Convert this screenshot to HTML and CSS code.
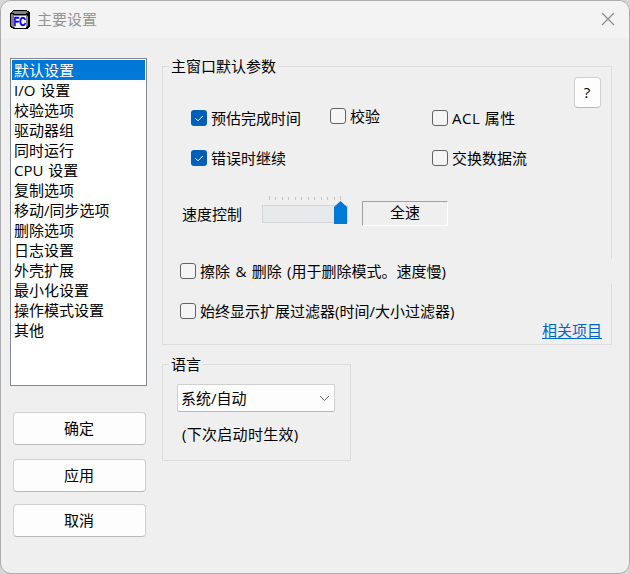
FILE: index.html
```html
<!DOCTYPE html>
<html lang="zh-CN">
<head>
<meta charset="utf-8">
<title>主要设置</title>
<link rel="stylesheet" href="styles.css">
</head>
<body>
<div class="window">
  <header class="titlebar">
    <svg class="app-icon" width="20" height="20" viewBox="0 0 20 20" shape-rendering="crispEdges">
      <path fill="#000" d="M3 0H17V1H19V2H20V17H19V18H18V19H3V18H1V17H0V3H1V2H2V1H3Z"/>
      <path fill="#808080" d="M3 1H17V2H18V3H16V4H4V3H2V2H3Z"/>
      <path fill="#808080" d="M1 4H3V5H17V6H18V16H17V17H16V18H4V17H2V16H1Z"/>
      <path fill="#fff" d="M4 6H16V18H5V17H4Z"/>
      <text x="3.6" y="16" textLength="12.4" lengthAdjust="spacingAndGlyphs">FC</text>
    </svg>
    <h1>主要设置</h1>
    <svg class="close" width="14" height="14" viewBox="0 0 14 14"><path d="M1 1L13 13M13 1L1 13"/></svg>
  </header>
  <main class="content">
    <aside class="sidebar">
      <ul class="listbox">
        <li class="selected">默认设置</li>
        <li>I/O 设置</li>
        <li>校验选项</li>
        <li>驱动器组</li>
        <li>同时运行</li>
        <li>CPU 设置</li>
        <li>复制选项</li>
        <li>移动/同步选项</li>
        <li>删除选项</li>
        <li>日志设置</li>
        <li>外壳扩展</li>
        <li>最小化设置</li>
        <li>操作模式设置</li>
        <li>其他</li>
      </ul>
      <div class="actions">
        <button class="button">确定</button>
        <button class="button apply">应用</button>
        <button class="button">取消</button>
      </div>
    </aside>
    <div class="panels">
      <section class="group defaults">
        <h2 class="legend">主窗口默认参数</h2>
        <button class="button help">?</button>
        <div class="checks">
          <label class="check"><span class="box on"><svg viewBox="0 0 16 16"><path d="M4.5 8.3L7 10.8L11.8 6"/></svg></span>预估完成时间</label>
          <label class="check raised"><span class="box"></span>校验</label>
          <label class="check acl"><span class="box"></span>ACL 属性</label>
          <label class="check"><span class="box on"><svg viewBox="0 0 16 16"><path d="M4.5 8.3L7 10.8L11.8 6"/></svg></span>错误时继续</label>
          <span></span>
          <label class="check"><span class="box"></span>交换数据流</label>
        </div>
        <div class="speed">
          <span class="speed-label">速度控制</span>
          <svg class="slider" width="88" height="32" viewBox="0 0 88 32">
            <path class="ticks" d="M7.5 0V4M13.5 1V4M20.5 1V4M26.5 1V4M33.5 1V4M39.5 1V4M46.5 1V4M52.5 1V4M59.5 1V4M65.5 1V4M72.5 1V4M78.5 0V4"/>
            <rect class="track" x=".5" y="9.5" width="85" height="17"/>
            <path class="thumb" d="M72 11L78.5 5L85 11V28H72Z"/>
          </svg>
          <span class="speed-value">全速</span>
        </div>
        <div class="wide">
          <label class="check wipe"><span class="box"></span>擦除 &amp; 删除 (用于删除模式。速度慢)</label>
        </div>
        <div class="wide second">
          <label class="check"><span class="box"></span>始终显示扩展过滤器(时间/大小过滤器)</label>
        </div>
        <a class="related">相关项目</a>
      </section>
      <section class="group language">
        <h2 class="legend">语言</h2>
        <div class="select">系统/自动<svg width="11" height="7" viewBox="0 0 11 7"><path d="M1 1L5.5 5.5L10 1"/></svg></div>
        <p class="note">(下次启动时生效)</p>
      </section>
    </div>
  </main>
</div>
</body>
</html>
```

FILE: styles.css
```css
* { box-sizing: border-box; }

body {
  margin: 0;
  background: #d6d6d6;
  color: #000;
  font: 15px/20px "Open Sans", "Noto Sans CJK SC", sans-serif;
}

.window {
  width: 630px;
  height: 574px;
  overflow: hidden;
  border: 1px solid #adadad;
  border-radius: 11px;
  background: #efefef;
}

.titlebar {
  display: flex;
  align-items: center;
  height: 37px;
  padding: 0 14px 0 9px;
  background: #f3f3f3;
}

.app-icon text {
  fill: #00f;
  stroke: #00f;
  stroke-width: .5;
  font: bold 12px "Liberation Sans", sans-serif;
}

.titlebar h1 {
  margin: 0 auto 2px 7px;
  color: #949494;
  font-size: 15px;
  font-weight: 400;
}

.close { margin-bottom: 1px; }
.close path { fill: none; stroke: #8b8b8b; stroke-width: 1.2; }

.content {
  display: flex;
  gap: 15px;
  padding: 20px 17px 0 9px;
}

.sidebar { width: 137px; }

.listbox {
  height: 328px;
  margin: 0;
  padding: 1px;
  border: 1px solid #828790;
  background: #fff;
  list-style: none;
}

.listbox li {
  height: 20px;
  padding-left: 2px;
  white-space: nowrap;
  word-spacing: 1px;
}

.listbox .selected { background: #0078d7; color: #fff; }

.actions {
  display: flex;
  flex-direction: column;
  padding: 26px 1px 0 3px;
}

.button {
  height: 33px;
  padding: 0 1px 2px 0;
  border: 1px solid #d0d0d0;
  border-bottom-color: #bababa;
  border-radius: 4px;
  background: #fdfdfd;
  color: #000;
  font: inherit;
}

.apply { margin: 14px 0 12px; }

.panels { width: 450px; padding-top: 8px; }

.group { position: relative; border: 1px solid #dcdcdc; }
.defaults { height: 279px; }

/* Gap in the right edge beside the wipe option */
.defaults::after {
  content: "";
  position: absolute;
  top: 192px;
  right: -1px;
  width: 1px;
  height: 25px;
  background: #efefef;
}

.legend {
  width: max-content;
  height: 20px;
  margin: -11px 0 0 6px;
  padding: 0 2px;
  background: #efefef;
  font-size: 15px;
  font-weight: 400;
}

.help {
  display: block;
  width: 27px;
  height: 31px;
  margin: 1px 10px 0 auto;
}

.checks {
  display: grid;
  grid-template-columns: 139px 102px 1fr;
  grid-auto-rows: 20px;
  row-gap: 20px;
  padding-left: 28px;
}

.check {
  display: flex;
  align-items: center;
  gap: 4px;
  height: 20px;
  white-space: nowrap;
}

.raised { margin-top: -2px; }
.acl { letter-spacing: .5px; }
.wipe { word-spacing: 1.5px; }

.box {
  width: 16px;
  height: 16px;
  border: 1px solid #626262;
  border-radius: 3px;
  background: #f5f5f5;
}

.on { border: 0; background: #005fb8; }
.on svg { display: block; }
.on path { fill: none; stroke: #fff; stroke-width: 1; }

.speed { display: flex; padding: 28px 0 0 19px; }
.speed-label { width: 80px; margin-top: 8px; }
.slider { flex: none; }
.ticks { stroke: #c4c4c4; }
.track { fill: #e7eaea; stroke: #d6d6d6; }
.thumb { fill: #0078d7; }

.speed-value {
  width: 86px;
  height: 25px;
  margin: 5px 0 0 12px;
  border: 1px solid;
  border-color: #a0a0a0 #fff #fff #a0a0a0;
  line-height: 20px;
  text-align: center;
}

.wide { padding: 33px 0 0 17px; }
.second { padding-top: 20px; }

.related {
  display: block;
  width: 60px;
  height: 18px;
  margin: 0 9px 0 auto;
  border-bottom: 1px solid #0066cc;
  color: #0066cc;
  line-height: 19px;
}

.language { width: 189px; height: 97px; margin-top: 19px; }

.select {
  display: flex;
  align-items: center;
  justify-content: space-between;
  width: 158px;
  height: 28px;
  margin: 10px 0 0 14px;
  padding: 0 4px 0 3px;
  border: 1px solid #d0d0d0;
  border-bottom-color: #bababa;
  border-radius: 2px;
  background: #fdfdfd;
}

.select path { fill: none; stroke: #606060; }
.note { margin: 12px 0 0 19px; letter-spacing: .3px; }
```
